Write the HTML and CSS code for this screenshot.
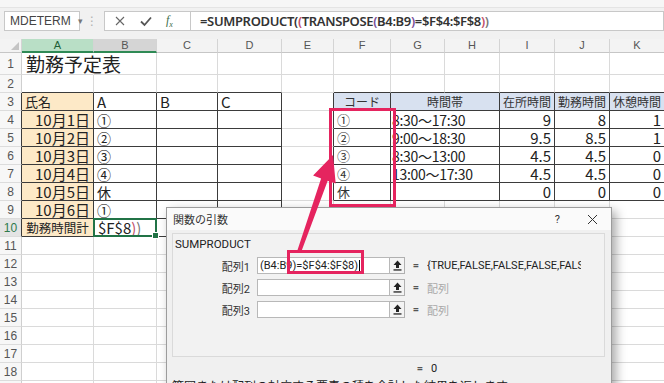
FILE: index.html
```html
<!DOCTYPE html>
<html lang="ja">
<head>
    <meta charset="UTF-8">
    <title>SUMPRODUCT - 関数の引数</title>
    <link rel="stylesheet" href="styles.css">
</head>
<body>
<div class="app">
    <div class="ribbon-edge"></div>
    <div class="formula-bar">
        <div class="name-box">MDETERM<span class="caret">▾</span></div>
        <div class="grip">⋮</div>
        <div class="fx-box">
            <svg class="fx-icon" width="12" height="12" viewBox="0 0 12 12"><path d="M2 2 L10 10 M10 2 L2 10" stroke="#666" stroke-width="1.1" fill="none"/></svg>
            <svg class="fx-icon" width="14" height="12" viewBox="0 0 14 12"><path d="M2 6.5 L5.5 10 L12 2.5" stroke="#555" stroke-width="1.8" fill="none"/></svg>
            <span class="fx"><i>f</i><sub>x</sub></span>
        </div>
        <div class="formula">=SUMPRODUCT(<span class="p2">(</span>TRANSPOSE<span class="p3">(</span>B4:B9<span class="p3">)</span>=$F$4:$F$8<span class="p2">)</span><span class="p1">)</span></div>
    </div>

    <div class="sheet">
        <div class="ch corner"><span class="tri"></span></div>
        <div class="ch sel-a">A</div><div class="ch sel-b">B</div><div class="ch">C</div><div class="ch">D</div><div class="ch">E</div><div class="ch">F</div><div class="ch">G</div><div class="ch">H</div><div class="ch">I</div><div class="ch">J</div><div class="ch">K</div>

        <div class="rh">1</div>
        <div class="c title">勤務予定表</div><div class="c"></div><div class="c"></div><div class="c"></div><div class="c"></div><div class="c"></div><div class="c"></div><div class="c"></div><div class="c"></div><div class="c"></div><div class="c"></div>

        <div class="rh">2</div>
        <div class="c bb"></div><div class="c bb"></div><div class="c bb"></div><div class="c bb"></div><div class="c"></div><div class="c bb"></div><div class="c bb"></div><div class="c bb"></div><div class="c bb"></div><div class="c bb"></div><div class="c bb"></div>

        <div class="rh br">3</div>
        <div class="c t fill small-l">氏名</div><div class="c t latin">A</div><div class="c t latin">B</div><div class="c t latin">C</div><div class="c br"></div>
        <div class="c t hd">コード</div><div class="c t hd span2">時間帯</div><div class="c t hd">在所時間</div><div class="c t hd">勤務時間</div><div class="c t hd">休憩時間</div>

        <div class="rh br">4</div>
        <div class="c t fill r">10月1日</div><div class="c t">①</div><div class="c t"></div><div class="c t"></div><div class="c br"></div>
        <div class="c t code">①</div><div class="c t span2 time">8:30～17:30</div><div class="c t r">9</div><div class="c t r">8</div><div class="c t r">1</div>

        <div class="rh br">5</div>
        <div class="c t fill r">10月2日</div><div class="c t">②</div><div class="c t"></div><div class="c t"></div><div class="c br"></div>
        <div class="c t code">②</div><div class="c t span2 time">9:00～18:30</div><div class="c t r">9.5</div><div class="c t r">8.5</div><div class="c t r">1</div>

        <div class="rh br">6</div>
        <div class="c t fill r">10月3日</div><div class="c t">③</div><div class="c t"></div><div class="c t"></div><div class="c br"></div>
        <div class="c t code">③</div><div class="c t span2 time">8:30～13:00</div><div class="c t r">4.5</div><div class="c t r">4.5</div><div class="c t r">0</div>

        <div class="rh br">7</div>
        <div class="c t fill r">10月4日</div><div class="c t">④</div><div class="c t"></div><div class="c t"></div><div class="c br"></div>
        <div class="c t code">④</div><div class="c t span2 time">13:00～17:30</div><div class="c t r">4.5</div><div class="c t r">4.5</div><div class="c t r">0</div>

        <div class="rh br">8</div>
        <div class="c t fill r">10月5日</div><div class="c t">休</div><div class="c t"></div><div class="c t"></div><div class="c br"></div>
        <div class="c t code">休</div><div class="c t span2"></div><div class="c t r">0</div><div class="c t r">0</div><div class="c t r">0</div>

        <div class="rh br">9</div>
        <div class="c t fill r">10月6日</div><div class="c t">①</div><div class="c t"></div><div class="c t"></div><div class="c"></div>
        <div class="c"></div><div class="c"></div><div class="c"></div><div class="c"></div><div class="c"></div><div class="c"></div>

        <div class="rh br active-row">10</div>
        <div class="c t fill ctr small">勤務時間計</div><div class="c t selected latin">$F$8<span class="p2">)</span><span class="p1">)</span></div><div class="c t"></div><div class="c t"></div><div class="c"></div>
        <div class="c"></div><div class="c"></div><div class="c"></div><div class="c"></div><div class="c"></div><div class="c"></div>

        <div class="rh">11</div><div class="c"></div><div class="c"></div><div class="c"></div><div class="c"></div><div class="c"></div><div class="c"></div><div class="c"></div><div class="c"></div><div class="c"></div><div class="c"></div><div class="c"></div>
        <div class="rh">12</div><div class="c"></div><div class="c"></div><div class="c"></div><div class="c"></div><div class="c"></div><div class="c"></div><div class="c"></div><div class="c"></div><div class="c"></div><div class="c"></div><div class="c"></div>
        <div class="rh">13</div><div class="c"></div><div class="c"></div><div class="c"></div><div class="c"></div><div class="c"></div><div class="c"></div><div class="c"></div><div class="c"></div><div class="c"></div><div class="c"></div><div class="c"></div>
        <div class="rh">14</div><div class="c"></div><div class="c"></div><div class="c"></div><div class="c"></div><div class="c"></div><div class="c"></div><div class="c"></div><div class="c"></div><div class="c"></div><div class="c"></div><div class="c"></div>
        <div class="rh">15</div><div class="c"></div><div class="c"></div><div class="c"></div><div class="c"></div><div class="c"></div><div class="c"></div><div class="c"></div><div class="c"></div><div class="c"></div><div class="c"></div><div class="c"></div>
        <div class="rh">16</div><div class="c"></div><div class="c"></div><div class="c"></div><div class="c"></div><div class="c"></div><div class="c"></div><div class="c"></div><div class="c"></div><div class="c"></div><div class="c"></div><div class="c"></div>
        <div class="rh">17</div><div class="c"></div><div class="c"></div><div class="c"></div><div class="c"></div><div class="c"></div><div class="c"></div><div class="c"></div><div class="c"></div><div class="c"></div><div class="c"></div><div class="c"></div>
        <div class="rh">18</div><div class="c"></div><div class="c"></div><div class="c"></div><div class="c"></div><div class="c"></div><div class="c"></div><div class="c"></div><div class="c"></div><div class="c"></div><div class="c"></div><div class="c"></div>
        <div class="rh">19</div><div class="c"></div><div class="c"></div><div class="c"></div><div class="c"></div><div class="c"></div><div class="c"></div><div class="c"></div><div class="c"></div><div class="c"></div><div class="c"></div><div class="c"></div>
    </div>

    <div class="dialog">
        <div class="dlg-title">
            <span class="dlg-name">関数の引数</span>
            <span class="dlg-help">?</span>
            <svg class="dlg-close" width="11" height="11" viewBox="0 0 11 11"><path d="M1 1 L10 10 M10 1 L1 10" stroke="#333" stroke-width="1" fill="none"/></svg>
        </div>
        <div class="dlg-body">
            <div class="group">
                <div class="group-name">SUMPRODUCT</div>
                <div class="arg-row">
                    <span class="arg-label">配列1</span>
                    <div class="arg-input">(B4:B9)=$F$4:$F$8)<span class="cursor"></span></div>
                    <button class="ref-btn"><svg width="9" height="11" viewBox="0 0 9 11"><path d="M4.5 0.5 L8.5 5 L6 5 L6 8 L3 8 L3 5 L0.5 5 Z" fill="#222"/><rect x="0.5" y="9.3" width="8" height="1.3" fill="#222"/></svg></button>
                    <span class="eq">=</span>
                    <span class="arg-val">{TRUE,FALSE,FALSE,FALSE,FALSE}</span>
                </div>
                <div class="arg-row">
                    <span class="arg-label">配列2</span>
                    <div class="arg-input"></div>
                    <button class="ref-btn"><svg width="9" height="11" viewBox="0 0 9 11"><path d="M4.5 0.5 L8.5 5 L6 5 L6 8 L3 8 L3 5 L0.5 5 Z" fill="#222"/><rect x="0.5" y="9.3" width="8" height="1.3" fill="#222"/></svg></button>
                    <span class="eq">=</span>
                    <span class="arg-val hint">配列</span>
                </div>
                <div class="arg-row">
                    <span class="arg-label">配列3</span>
                    <div class="arg-input"></div>
                    <button class="ref-btn"><svg width="9" height="11" viewBox="0 0 9 11"><path d="M4.5 0.5 L8.5 5 L6 5 L6 8 L3 8 L3 5 L0.5 5 Z" fill="#222"/><rect x="0.5" y="9.3" width="8" height="1.3" fill="#222"/></svg></button>
                    <span class="eq">=</span>
                    <span class="arg-val hint">配列</span>
                </div>
            </div>
            <div class="result-row"><span class="eq">=</span><span class="arg-val">0</span></div>
            <div class="desc">範囲または配列の対応する要素の積を合計した結果を返します。</div>
        </div>
    </div>

    <svg class="marks" width="664" height="383" viewBox="0 0 664 383">
        <rect x="330.5" y="109.5" width="64" height="96" fill="none" stroke="#e5245f" stroke-width="3"/>
        <rect x="288.5" y="251.5" width="74" height="21" fill="none" stroke="#e5245f" stroke-width="3"/>
        <polygon points="333,155 335.7,183.6 327.7,180.8 300.9,252.7 297.1,251.3 321.1,178.4 313.1,175.6" fill="#e5245f"/>
    </svg>
</div>
</body>
</html>
```

FILE: styles.css
```css
* {
    margin: 0;
    padding: 0;
    box-sizing: border-box;
}
body {
    background: #fff;
    font-family: "Noto Sans CJK JP", sans-serif;
    color: #222;
}
.app {
    position: relative;
    width: 664px;
    height: 383px;
    overflow: hidden;
    background: #fff;
}

/* formula bar */
.ribbon-edge {
    height: 8px;
    background: #f6f6f6;
    border-bottom: 1px solid #e4e4e4;
}
.formula-bar {
    height: 31px;
    background: #f1f1f1;
    display: flex;
    align-items: flex-start;
    padding: 3px 0 0 4px;
}
.name-box {
    width: 76px;
    height: 20px;
    background: #fff;
    border: 1px solid #c8c8c8;
    display: flex;
    align-items: center;
    padding-left: 5px;
    font: 12px "Liberation Sans", sans-serif;
    color: #444;
    white-space: nowrap;
}
.caret {
    margin-left: 7px;
    font-size: 9px;
    color: #777;
}
.grip {
    width: 24px;
    height: 20px;
    text-align: center;
    color: #b0b0b0;
    font: 12px/20px "DejaVu Sans", sans-serif;
}
.fx-box {
    width: 86px;
    height: 20px;
    background: #fff;
    border: 1px solid #c8c8c8;
    border-right: none;
    display: flex;
    align-items: center;
    padding-left: 9px;
    gap: 13px;
}
.fx {
    font: italic 12px "Liberation Serif", serif;
    color: #3d6e4a;
}
.fx sub {
    font-size: 8px;
}
.formula {
    flex: 1;
    height: 20px;
    background: #fff;
    border: 1px solid #c8c8c8;
    padding-left: 9px;
    font: 600 13px/18px "Noto Sans", sans-serif;
    letter-spacing: -0.35px;
    color: #333;
    white-space: nowrap;
}
.p1 { color: #777; }
.p2 { color: #c2506a; }
.p3 { color: #7a4f9a; }

/* sheet */
.sheet {
    display: grid;
    grid-template-columns: 22px 72px 63px 61px 64px 52px 57px 54px 55px 55px 55px 55px;
    grid-template-rows: 14px 22px;
    grid-auto-rows: 18px;
}
.ch {
    background: #f3f3f3;
    border-right: 1px solid #d4d4d4;
    border-bottom: 1px solid #c6c6c6;
    font: 11px/13px "Liberation Sans", sans-serif;
    color: #555;
    text-align: center;
}
.corner {
    position: relative;
}
.tri {
    position: absolute;
    right: 2px;
    bottom: 2px;
    border-left: 8px solid transparent;
    border-bottom: 8px solid #c4c4c4;
}
.sel-a {
    background: #b9dfc6;
    border-bottom: 2px solid #2f8a55;
    color: #1f5f38;
}
.sel-b {
    background: #d5d5d5;
    border-bottom: 2px solid #2f8a55;
}
.rh {
    background: #f7f7f7;
    border-right: 1px solid #cfcfcf;
    border-bottom: 1px solid #dcdcdc;
    font: 12px/14px "Liberation Sans", sans-serif;
    color: #555;
    display: flex;
    align-items: center;
    justify-content: center;
}
.active-row {
    background: #e4e4e4;
    color: #2f7a4c;
}
.c {
    border-right: 1px solid #dadada;
    border-bottom: 1px solid #dadada;
    display: flex;
    align-items: center;
    padding: 0 3px;
    white-space: nowrap;
    font-size: 14px;
    line-height: 16px;
    color: #222;
}
.t {
    border-right-color: #3b3b3b;
    border-bottom-color: #3b3b3b;
}
.bb { border-bottom-color: #3b3b3b; }
.br { border-right-color: #3b3b3b; }
.r { justify-content: flex-end; font-size: 15px; }
.ctr { justify-content: center; }
.span2 { grid-column: span 2; }
.fill { background: #fde9c7; }
.small { font-size: 12.5px; }
.small-l { font-size: 13px; }
.latin { font-size: 15px; }
.title {
    font-size: 19px;
    line-height: 21px;
    border-right-color: transparent;
    padding-left: 4px;
}
.hd {
    background: #d8e1f0;
    font-size: 12px;
    color: #333;
    justify-content: center;
}
.code { font-size: 13px; color: #333; }
.time { font-size: 14px; padding-left: 1px; letter-spacing: -0.3px; }
.selected {
    position: relative;
    padding-left: 4px;
}
.selected::after {
    content: "";
    position: absolute;
    left: -1px;
    top: -1px;
    right: -1px;
    bottom: -1px;
    border: 2px solid #217346;
}
.selected::before {
    content: "";
    position: absolute;
    right: -3px;
    bottom: -3px;
    width: 5px;
    height: 5px;
    background: #217346;
    border: 1px solid #fff;
    z-index: 1;
}

/* dialog */
.dialog {
    position: absolute;
    left: 166px;
    top: 207px;
    width: 446px;
    height: 200px;
    background: #f0f0f0;
    border: 1px solid #9c9c9c;
    box-shadow: 4px 4px 10px rgba(0,0,0,0.35);
    font-family: Roboto, "Noto Sans CJK JP", sans-serif;
    color: #222;
    z-index: 3;
}
.dlg-title {
    height: 22px;
    background: #fafafa;
    display: flex;
    align-items: center;
    padding-left: 6px;
    font-size: 11px;
}
.dlg-name {
    flex: 1;
    color: #333;
}
.dlg-help {
    font-size: 11px;
    margin-right: 27px;
    color: #333;
}
.dlg-close {
    margin-right: 13px;
}
.dlg-body {
    padding: 3px 6px 0 5px;
}
.group {
    width: 433px;
    height: 124px;
    background: #f2f2f2;
    border: 1px solid #dadada;
    padding-top: 3px;
}
.group-name {
    font-size: 11.5px;
    padding-left: 2px;
    height: 16px;
    margin-bottom: 4px;
}
.arg-row {
    display: flex;
    align-items: center;
    height: 17px;
    margin-bottom: 5px;
    font-size: 11px;
}
.arg-label {
    width: 77px;
    text-align: right;
    margin-right: 7px;
    color: #333;
}
.arg-input {
    width: 133px;
    height: 17px;
    background: #fff;
    border: 1px solid #b8b8b8;
    padding-left: 2px;
    line-height: 15px;
    white-space: nowrap;
    overflow: hidden;
    display: flex;
    align-items: center;
}
.cursor {
    display: inline-block;
    width: 1px;
    height: 12px;
    background: #000;
    margin-left: 1px;
}
.ref-btn {
    width: 15px;
    height: 17px;
    border: 1px solid #b0b0b0;
    border-left: none;
    background: #f4f4f4;
    display: flex;
    align-items: center;
    justify-content: center;
}
.eq {
    width: 22px;
    text-align: center;
    color: #555;
    font-weight: 700;
}
.arg-val {
    width: 154px;
    overflow: hidden;
    white-space: nowrap;
}
.hint {
    color: #a8a8a8;
}
.result-row {
    display: flex;
    align-items: center;
    height: 18px;
    margin-top: 2px;
    padding-left: 237px;
    font-size: 11px;
}
.desc {
    font-size: 12px;
}

.marks {
    position: absolute;
    left: 0;
    top: 0;
    pointer-events: none;
    z-index: 5;
}
```
